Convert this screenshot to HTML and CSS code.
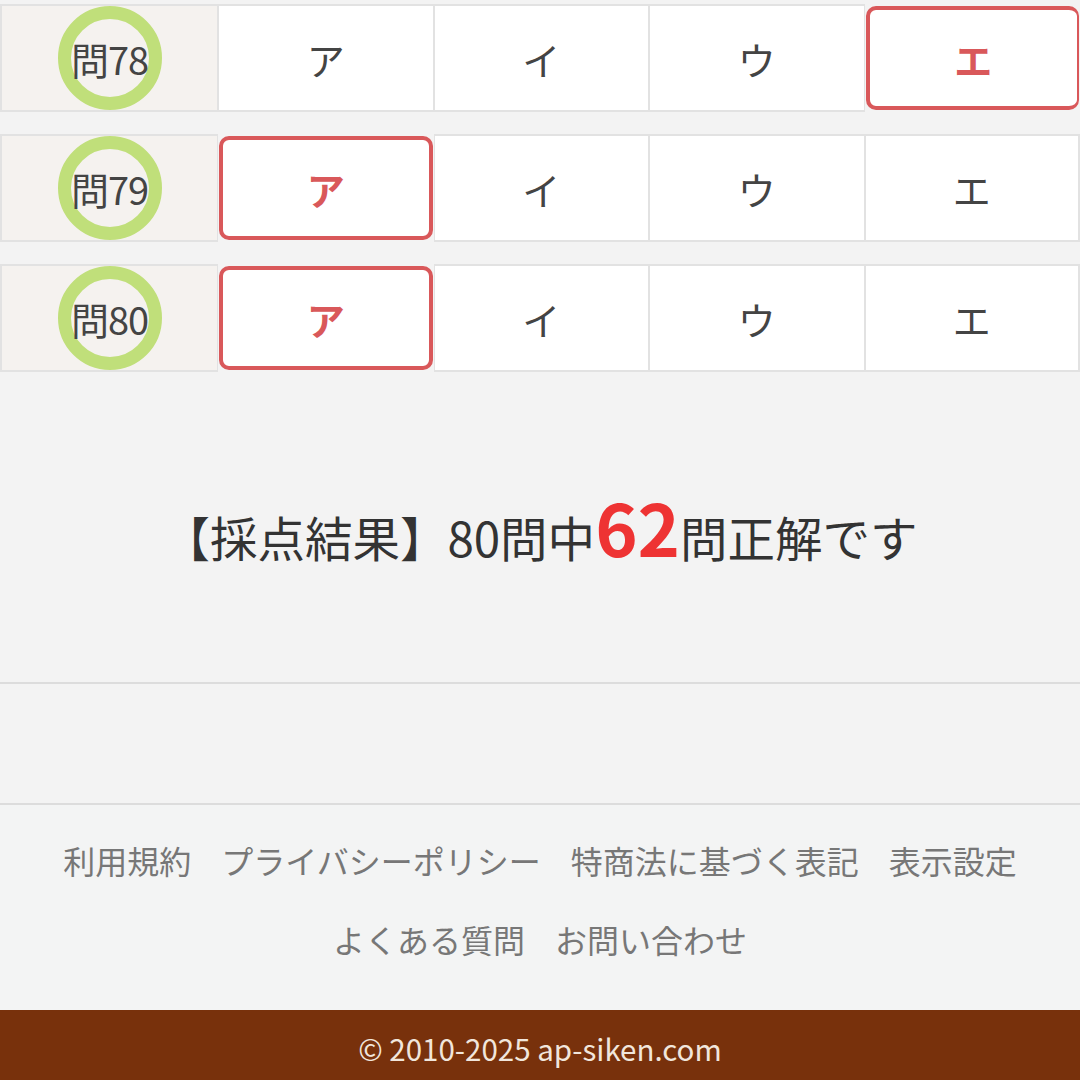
FILE: index.html
```html
<!DOCTYPE html>
<html lang="ja">

<head>
    <meta charset="UTF-8">
    <title>採点結果</title>
    <link rel="stylesheet" href="styles.css">
</head>

<body>
    <div class="answers">
        <div class="q-row">
            <div class="q-no"><span class="ring"></span><span class="q-label">問78</span></div>
            <div class="ans">ア</div>
            <div class="ans">イ</div>
            <div class="ans">ウ</div>
            <div class="ans selected">エ</div>
        </div>
        <div class="q-row">
            <div class="q-no"><span class="ring"></span><span class="q-label">問79</span></div>
            <div class="ans selected">ア</div>
            <div class="ans">イ</div>
            <div class="ans">ウ</div>
            <div class="ans">エ</div>
        </div>
        <div class="q-row">
            <div class="q-no"><span class="ring"></span><span class="q-label">問80</span></div>
            <div class="ans selected">ア</div>
            <div class="ans">イ</div>
            <div class="ans">ウ</div>
            <div class="ans">エ</div>
        </div>
    </div>

    <div class="result">【採点結果】80問中<span class="score">62</span>問正解です</div>

    <div class="spacer"></div>

    <div class="footer">
        <div class="links">
            <a href="#">利用規約</a>
            <a href="#">プライバシーポリシー</a>
            <a href="#">特商法に基づく表記</a>
            <a href="#">表示設定</a>
        </div>
        <div class="links">
            <a href="#">よくある質問</a>
            <a href="#">お問い合わせ</a>
        </div>
    </div>

    <div class="copy">© 2010-2025 ap-siken.com</div>
</body>

</html>
```

FILE: styles.css
```css
body {
    margin: 0;
    background: #f3f3f3;
    font-family: "Noto Sans CJK JP", "Noto Sans", sans-serif;
    color: #333;
}

.answers {
    padding-top: 4px;
}

.q-row {
    display: grid;
    grid-template-columns: 218px 1fr 1fr 1fr 1fr;
    height: 108px;
    margin-bottom: 22px;
    box-sizing: border-box;
}

.q-no,
.ans {
    box-sizing: border-box;
    border: 1px solid #e2e2e2;
    border-width: 2px 1px;
    display: grid;
    place-items: center;
}

.q-no {
    background: #f5f2ef;
    border-left-width: 2px;
}

.ring,
.q-label {
    grid-area: 1 / 1;
}

.ring {
    width: 104px;
    height: 104px;
    box-sizing: border-box;
    border: 13px solid #c0df7a;
    border-radius: 50%;
}

.q-label {
    font-size: 38px;
    color: #444;
    letter-spacing: -1px;
}

.ans {
    background: #fff;
    font-size: 38px;
    color: #444;
}

.ans:last-child {
    border-right-width: 2px;
}

.selected {
    border: 4px solid #d9585a;
    border-radius: 10px;
    margin: 2px 1px;
    color: #d9585a;
    font-weight: bold;
}

.result {
    text-align: center;
    font-size: 47.5px;
    line-height: 80px;
    padding: 92px 0 105px;
    color: #333;
}

.score {
    font-size: 72px;
    font-weight: bold;
    color: #ee3333;
}

.spacer {
    height: 119px;
    border-top: 2px solid #dcdcdc;
    border-bottom: 2px solid #dcdcdc;
}

.footer {
    background: #f3f4f4;
    padding: 16px 0 31px;
}

.links {
    display: flex;
    justify-content: center;
    gap: 30px;
    font-size: 32px;
    line-height: 79px;
}

.links a {
    color: #777;
    text-decoration: none;
}

.copy {
    background: #78310c;
    color: #f1e6dc;
    text-align: center;
    font-size: 29.5px;
    height: 70px;
    line-height: 76px;
}
```
